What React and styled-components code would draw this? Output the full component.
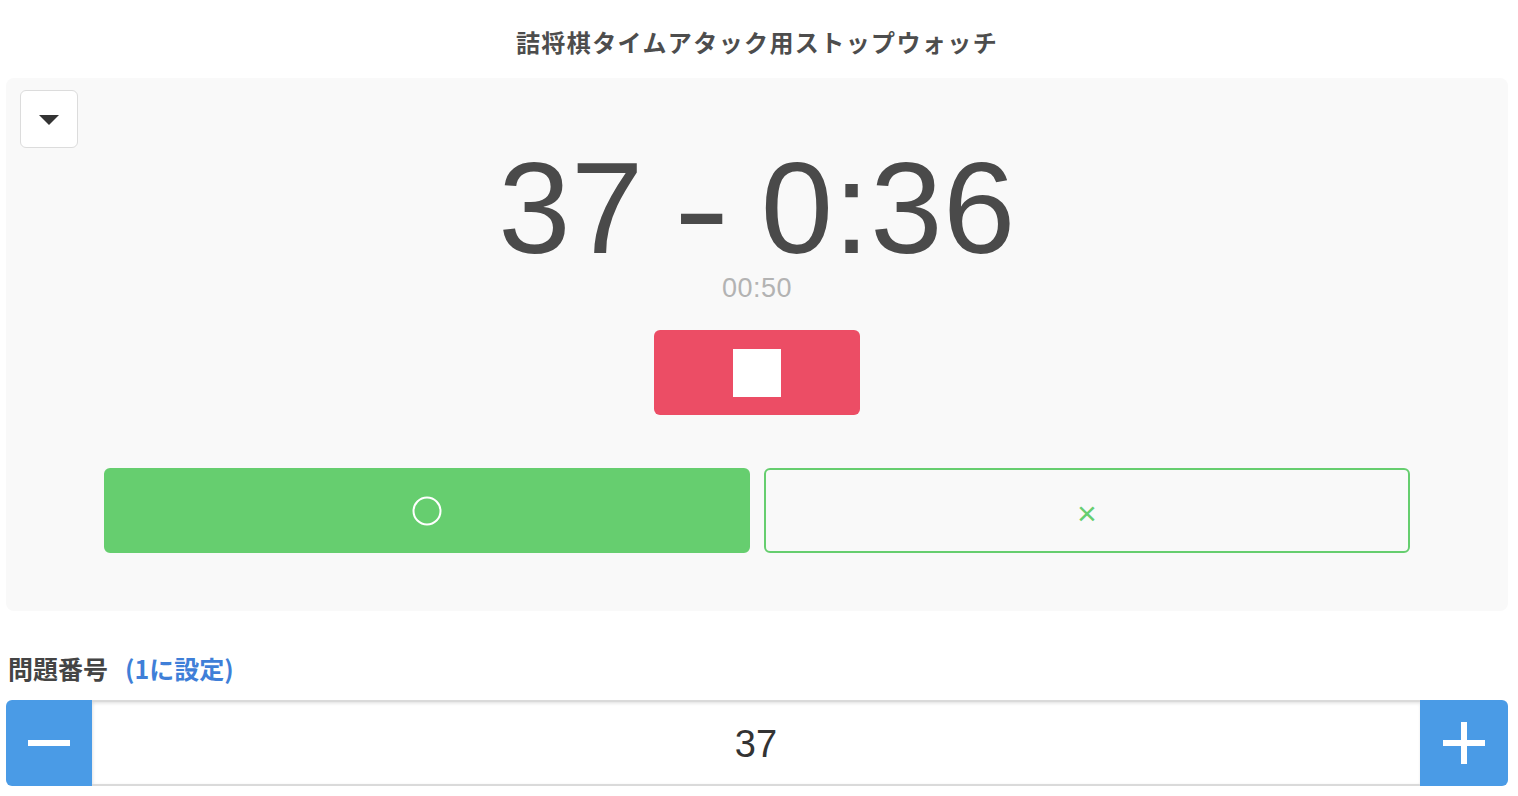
import React from "react";
import styled, { createGlobalStyle } from "styled-components";

const GlobalStyle = createGlobalStyle`
  html, body { margin: 0; padding: 0; background: #ffffff; }
  body { font-family: "Liberation Sans", "Noto Sans CJK JP", sans-serif; color: #4a4a4a; }
  * { box-sizing: border-box; }
`;

const Page = styled.div`
  padding: 0 10px 0 6px;
  width: 1518px;
`;

const Title = styled.h1`
  margin: 0;
  padding-top: 28px;
  height: 78px;
  font-family: "Noto Sans CJK JP", sans-serif;
  font-size: 24px;
  line-height: 28px;
  font-weight: 700;
  letter-spacing: 1.4px;
  text-align: center;
  color: #4d4d4d;
`;

const Panel = styled.section`
  position: relative;
  background: #f9f9f9;
  border-radius: 8px;
  padding: 65px 98px 58px;
  display: flex;
  flex-direction: column;
  align-items: center;
`;

const MenuToggle = styled.button`
  position: absolute;
  top: 12px;
  left: 14px;
  width: 58px;
  height: 58px;
  background: #ffffff;
  border: 1.5px solid #dcdcdc;
  border-radius: 6px;
  display: flex;
  align-items: center;
  justify-content: center;
  padding: 0;
`;

const Caret = styled.span`
  width: 0;
  height: 0;
  border-left: 10px solid transparent;
  border-right: 10px solid transparent;
  border-top: 10px solid #333333;
  margin-top: 2px;
`;

const Clock = styled.div`
  font-family: "Liberation Sans", Arial, sans-serif;
  font-size: 130px;
  line-height: 130px;
  height: 130px;
  color: #4a4a4a;
  white-space: pre;
  letter-spacing: 0.5px;
`;

const Dash = styled.span`
  display: inline-block;
  transform: scaleX(1.3);
`;

const Elapsed = styled.div`
  margin-top: 2px;
  font-family: "Liberation Sans", Arial, sans-serif;
  font-size: 27px;
  line-height: 26px;
  height: 26px;
  color: #b3b3b3;
  letter-spacing: 0.5px;
`;

const StopButton = styled.button`
  margin-top: 29px;
  width: 206px;
  height: 85px;
  border: none;
  border-radius: 6px;
  background: #ec4d65;
  display: flex;
  align-items: center;
  justify-content: center;
  padding: 0;
`;

const StopSquare = styled.span`
  width: 48px;
  height: 48px;
  background: #ffffff;
`;

const AnswerRow = styled.div`
  margin-top: 53px;
  width: 100%;
  display: grid;
  grid-template-columns: 1fr 1fr;
  gap: 14px;
`;

const AnswerButton = styled.button`
  height: 85px;
  border-radius: 6px;
  border: 2px solid #66ce6f;
  background: ${(p) => (p.$filled ? "#66ce6f" : "transparent")};
  color: ${(p) => (p.$filled ? "#ffffff" : "#66ce6f")};
  display: flex;
  align-items: center;
  justify-content: center;
  padding: 0;
  font-family: "Liberation Sans", Arial, sans-serif;
  font-size: 34px;
  line-height: 1;
`;

const Cross = styled.span`
  display: block;
  margin-top: 4px;
`;

const LabelRow = styled.div`
  margin-top: 42px;
  margin-bottom: 17px;
  padding-left: 2px;
  height: 30px;
  display: flex;
  align-items: center;
  gap: 17px;
  font-family: "Noto Sans CJK JP", sans-serif;
  font-weight: 700;
  font-size: 25px;
  line-height: 30px;
`;

const LabelText = styled.span`
  color: #444444;
`;

const ResetLink = styled.a`
  color: #3f7fd8;
  text-decoration: none;
`;

const Stepper = styled.div`
  display: flex;
  height: 86px;
`;

const StepButton = styled.button`
  width: ${(p) => p.$w}px;
  flex: none;
  border: none;
  background: #4a9be6;
  border-radius: ${(p) => (p.$side === "left" ? "6px 0 0 6px" : "0 6px 6px 0")};
  display: flex;
  align-items: center;
  justify-content: center;
  padding: 0;
`;

const NumberField = styled.div`
  flex: 1;
  background: #ffffff;
  border-top: 2px solid #dadada;
  border-bottom: 2px solid #dadada;
  box-shadow: inset 0 2px 3px rgba(0, 0, 0, 0.08), inset 2px 0 3px rgba(0, 0, 0, 0.05);
  display: flex;
  align-items: center;
  justify-content: center;
  padding-top: 3px;
  font-family: "Liberation Sans", Arial, sans-serif;
  font-size: 38px;
  color: #333333;
`;

const Icon = ({ children, size }) => (
  <svg width={size} height={size} viewBox={`0 0 ${size} ${size}`}>
    {children}
  </svg>
);

export default function App() {
  return (
    <>
      <GlobalStyle />
      <Page>
        <Title>詰将棋タイムアタック用ストップウォッチ</Title>
        <Panel>
          <MenuToggle aria-label="menu">
            <Caret />
          </MenuToggle>
          <Clock>
            37 <Dash>-</Dash> 0:36
          </Clock>
          <Elapsed>00:50</Elapsed>
          <StopButton aria-label="stop">
            <StopSquare />
          </StopButton>
          <AnswerRow>
            <AnswerButton $filled aria-label="correct">
              <Icon size={32}>
                <circle cx="16" cy="16" r="13.5" fill="none" stroke="#ffffff" strokeWidth="2" />
              </Icon>
            </AnswerButton>
            <AnswerButton aria-label="wrong">
              <Cross>×</Cross>
            </AnswerButton>
          </AnswerRow>
        </Panel>
        <LabelRow>
          <LabelText>問題番号</LabelText>
          <ResetLink href="#">(1に設定)</ResetLink>
        </LabelRow>
        <Stepper>
          <StepButton $side="left" $w={86} aria-label="minus">
            <Icon size={42}>
              <rect x="0" y="18" width="42" height="6" fill="#ffffff" />
            </Icon>
          </StepButton>
          <NumberField>37</NumberField>
          <StepButton $side="right" $w={88} aria-label="plus">
            <Icon size={42}>
              <rect x="0" y="18" width="42" height="6" fill="#ffffff" />
              <rect x="18" y="0" width="6" height="42" fill="#ffffff" />
            </Icon>
          </StepButton>
        </Stepper>
      </Page>
    </>
  );
}
